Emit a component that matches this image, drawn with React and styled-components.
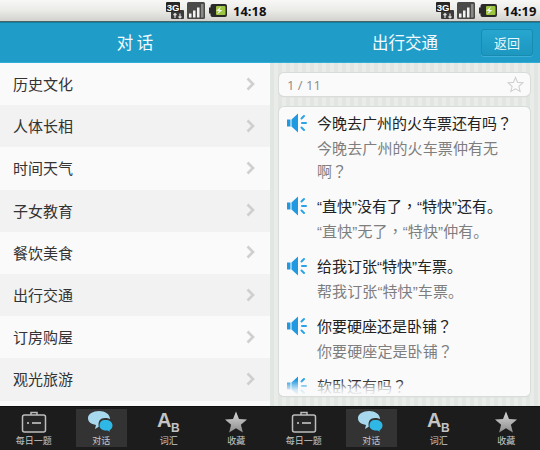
import React from 'react'
import styled, { createGlobalStyle } from 'styled-components'

const Global = createGlobalStyle`
  html, body { margin: 0; padding: 0; background: #1c1c1c; }
  * { box-sizing: border-box; }
  body { font-family: "Noto Sans CJK SC", "Noto Sans", sans-serif; }
`

const Page = styled.div`
  display: grid;
  grid-template-columns: 270px 270px;
  width: 540px;
  height: 450px;
  overflow: hidden;
`
const Screen = styled.div`
  display: flex;
  flex-direction: column;
  height: 450px;
  min-width: 0;
`
const StatusBar = styled.div`
  flex: 0 0 22px;
  height: 22px;
  display: flex;
  align-items: center;
  justify-content: flex-end;
  padding-right: 5px;
  background: linear-gradient(#f7f7f5, #ecece9 45%, #d2d2ce);
  border-bottom: 1px solid #4a6468;
`
const IconSlot = styled.span`
  display: flex;
  margin-right: ${p => p.$gap}px;
`
const Time = styled.span`
  font-family: "Open Sans", Arial, sans-serif;
  font-weight: 700;
  font-size: 13px;
  color: #111;
  width: 32px;
  white-space: nowrap;
`
const Header = styled.div`
  flex: 0 0 41px;
  height: 41px;
  padding-bottom: 1px;
  background: #1f9dc8;
  border-top: 1px solid #14809f;
  border-bottom: 1px solid #33acd6;
  display: flex;
  align-items: center;
  justify-content: center;
  position: relative;
  color: #f2fafd;
  font-size: 16.5px;
`
const BackButton = styled.div`
  position: absolute;
  right: 7px;
  top: 6px;
  width: 52px;
  height: 27px;
  border-radius: 3px;
  background: linear-gradient(#27a6cf, #1b97c0);
  border: 1px solid #1a8bb0;
  box-shadow: 0 1px 0 #3cb0d8;
  color: #e8f7fb;
  font-size: 13px;
  display: flex;
  align-items: center;
  justify-content: center;
`
const List = styled.div`
  flex: 1;
  display: flex;
  flex-direction: column;
  background: #fafafa;
  overflow: hidden;
`
const Row = styled.div`
  flex: 0 0 42.2px;
  display: flex;
  align-items: center;
  justify-content: space-between;
  padding: 0 15px 1px 13px;
  font-size: 15px;
  color: #333;
  background: ${p => (p.$alt ? '#f2f2f2' : '#fafafa')};
`
const Detail = styled.div`
  flex: 1;
  min-height: 0;
  padding: 10px 10px 10px 9px;
  display: flex;
  flex-direction: column;
  gap: 11px;
  background: repeating-linear-gradient(90deg, #e2e6e2 0 4px, #e9ece9 4px 8px);
`
const Card = styled.div`
  background: #fafafa;
  border-radius: 5px;
  box-shadow: 0 0 0 1px #d8dcd8, 0 1px 1px #c8ccc8;
`
const Counter = styled(Card)`
  flex: 0 0 23px;
  display: flex;
  align-items: center;
  justify-content: space-between;
  padding: 0 6px 0 8px;
  font-family: "Open Sans", "Noto Sans", sans-serif;
  font-size: 13px;
  color: #8c8c8c;
`
const Sentences = styled(Card)`
  flex: 1;
  min-height: 0;
  overflow: hidden;
  position: relative;
  padding: 4px 8px 0 8px;
`
const Fade = styled.div`
  position: absolute;
  left: 0;
  right: 0;
  bottom: 0;
  height: 16px;
  background: linear-gradient(rgba(250,250,250,0), rgba(250,250,250,0.8) 60%, #fafafa);
`
const Sentence = styled.div`
  display: grid;
  grid-template-columns: 30px 1fr;
  margin-bottom: 12px;
`
const SpeakerCell = styled.div`
  padding-top: 2px;
`
const Mandarin = styled.div`
  font-size: 15px;
  line-height: 24px;
  color: #222;
`
const Cantonese = styled.div`
  font-size: 15px;
  line-height: 23px;
  margin-top: 1px;
  color: #7e7e7e;
  letter-spacing: 0.1px;
`
const Punct = styled.span`
  font-family: "Noto Sans CJK TC", sans-serif;
  line-height: 0;
`
const Quote = styled.span`
  font-family: "Liberation Sans", sans-serif;
  line-height: 0;
`
const TabBar = styled.div`
  flex: 0 0 44px;
  height: 44px;
  display: grid;
  grid-template-columns: repeat(4, 1fr);
  padding: 2px 0 3px 0;
  background: #1c1c1c;
  border-top: 1px solid #111;
`
const Tab = styled.div`
  display: flex;
  flex-direction: column;
  align-items: center;
  justify-content: flex-end;
  margin: 0 ${p => (p.$active ? '8px' : '0')};
  background: ${p => (p.$active ? '#333' : 'transparent')};
  color: #c8c8c8;
  font-size: 9px;
  line-height: 11px;
  gap: 1px;
  padding-bottom: 1px;
`
const Glyph = styled.svg`
  overflow: visible;
`

const Net3G = () => (
  <Glyph width="18" height="17" viewBox="0 0 18 17">
    <rect x="5" y="8" width="13" height="9" rx="1" fill="#3a3a3a" />
    <rect x="0" y="0" width="14" height="10" rx="1" fill="#262626" />
    <text x="0.800" y="8.700" fontFamily="Liberation Sans" fontWeight="700" fontSize="9.500" fill="#fff">3G</text>
    <path d="M9 16v-4.500M7.500 13L9 11.500l1.500 1.500M14 11.500V16M12.500 14.500L14 16l1.500-1.500" stroke="#ddd" strokeWidth="1.200" fill="none" />
  </Glyph>
)
const Signal = () => (
  <svg width="18" height="17" viewBox="0 0 18 17">
    <rect width="18" height="17" rx="1.500" fill="#4a4a48" />
    <path d="M2 15.500h2.500v-4H2zM6 15.500h2.500v-7H6zM10 15.500h2.500v-10H10z" fill="#f2f2f2" />
    <path d="M14 15.500h2.500V2H14z" fill="#8a8a86" />
  </svg>
)
const Battery = () => (
  <svg width="18" height="13" viewBox="0 0 18 13">
    <rect x="0" y="3.500" width="2" height="6" fill="#2a2a2a" />
    <rect x="1.500" y="0" width="16.500" height="13" rx="2" fill="#2a2a2a" />
    <rect x="7" y="2" width="9.500" height="9" rx="1" fill="#9cc63f" />
    <path d="M12 2.500L7 7h3L8 10.500 13.500 6h-3z" fill="#f4f4f4" />
  </svg>
)
const Chevron = () => (
  <svg width="9" height="14" viewBox="0 0 9 14">
    <path d="M1.500 1.500L7 7l-5.500 5.500" fill="none" stroke="#cfcfcf" strokeWidth="2.600" />
  </svg>
)
const StarOutline = () => (
  <svg width="17" height="17" viewBox="0 0 24 24">
    <path d="M12 2l3 7 7.500.6-5.700 4.900 1.800 7.400L12 18l-6.600 3.900 1.800-7.400L1.500 9.600 9 9z" fill="#fbfbfb" stroke="#d0d0d0" strokeWidth="1.500" />
  </svg>
)
const Speaker = () => (
  <svg width="20" height="20" viewBox="0 0 20 20">
    <path d="M0 6.500h3.500v7H0zM4.500 6.500L11 .5v19l-6.500-6z" fill="#2199e0" />
    <path d="M14.500 5.500l2.500-2.500M15 10h4M14.500 14.500l2.500 2.500" stroke="#2ba3e6" strokeWidth="2" strokeLinecap="round" fill="none" />
  </svg>
)
const CaseIcon = () => (
  <svg width="26" height="24" viewBox="0 0 26 24">
    <path d="M10 5V2.500h6V5" fill="none" stroke="#bdbdbd" strokeWidth="1.500" />
    <rect x="1.500" y="5" width="23" height="17" rx="2" fill="#262626" stroke="#bdbdbd" strokeWidth="1.500" />
    <path d="M6 13h2M11 13h9" stroke="#cfcfcf" strokeWidth="1.500" />
  </svg>
)
const BubblesIcon = () => (
  <svg width="28" height="24" viewBox="0 0 28 24">
    <path d="M12 1c6 0 11 3 11 8 0 5-5 7-10 7l-5 3 1-4C4 14 1 12 1 8c0-4 5-7 11-7z" fill="#a8d8ee" />
    <path d="M18 8c5 0 9 2.500 9 7 0 3-1.500 5-3.500 6l1 2.500-4-2c-5 0-9-2.500-9-6.500S13 8 18 8z" fill="#333" />
    <path d="M18.500 10c4 0 7 2 7 5.500 0 2.500-1.500 4-3 4.800l.5 1.500-2.500-1.300c-4.500.3-8-1.500-8-5S14.500 10 18.500 10z" fill="#2fb8e6" />
  </svg>
)
const AbIcon = () => (
  <Glyph width="26" height="24" viewBox="0 0 26 24">
    <text x="1" y="17" fontFamily="Liberation Sans" fontWeight="700" fontSize="20" fill="#c4c4c4">A</text>
    <text x="15" y="22" fontFamily="Liberation Sans" fontWeight="700" fontSize="12" fill="#c4c4c4">B</text>
  </Glyph>
)
const StarIcon = () => (
  <svg width="24" height="24" viewBox="0 0 24 24">
    <defs>
      <linearGradient id="starfill" x1="0" y1="0" x2="0" y2="1">
        <stop offset="0" stopColor="#d8d8d8" />
        <stop offset="1" stopColor="#8c8c8c" />
      </linearGradient>
    </defs>
    <path d="M12 1.500l3 7.500 8 .6-6.100 5.100 2 7.800L12 18.200l-6.900 4.300 2-7.800L1 9.600 9 9z" fill="url(#starfill)" />
  </svg>
)

const topics = ['历史文化', '人体长相', '时间天气', '子女教育', '餐饮美食', '出行交通', '订房购屋', '观光旅游']
const sentences = [
  ['今晚去广州的火车票还有吗？', '今晚去广州的火车票仲有无啊？'],
  ['“直快”没有了，“特快”还有。', '“直快”无了，“特快”仲有。'],
  ['给我订张“特快”车票。', '帮我订张“特快”车票。'],
  ['你要硬座还是卧铺？', '你要硬座定是卧铺？'],
  ['软卧还有吗？', ''],
]
const tabs = [
  ['每日一题', CaseIcon],
  ['对话', BubblesIcon],
  ['词汇', AbIcon],
  ['收藏', StarIcon],
]

// reference has narrow quotes and full-width ， ？ centred in the cell
const styledMarks = text =>
  text.split(/([，？“”])/).map((part, i) => {
    if (i % 2 === 0) return part
    return /[“”]/.test(part) ? <Quote key={i}>{part}</Quote> : <Punct key={i}>{part}</Punct>
  })

function Status({ time }) {
  return (
    <StatusBar>
      <IconSlot $gap={3}><Net3G /></IconSlot>
      <IconSlot $gap={4}><Signal /></IconSlot>
      <IconSlot $gap={6}><Battery /></IconSlot>
      <Time>{time}</Time>
    </StatusBar>
  )
}

function Tabs() {
  return (
    <TabBar>
      {tabs.map(([label, Icon], i) => (
        <Tab key={label} $active={i === 1}>
          <Icon />
          {label}
        </Tab>
      ))}
    </TabBar>
  )
}

export default function App() {
  return (
    <Page>
      <Global />
      <Screen>
        <Status time="14:18" />
        <Header>对 话</Header>
        <List>
          {topics.map((t, i) => (
            <Row key={t} $alt={i % 2 === 1}>
              {t}
              <Chevron />
            </Row>
          ))}
        </List>
        <Tabs />
      </Screen>
      <Screen>
        <Status time="14:19" />
        <Header>
          出行交通
          <BackButton>返回</BackButton>
        </Header>
        <Detail>
          <Counter>
            1 / 11
            <StarOutline />
          </Counter>
          <Sentences>
            {sentences.map(([m, c]) => (
              <Sentence key={m}>
                <SpeakerCell><Speaker /></SpeakerCell>
                <div>
                  <Mandarin>{styledMarks(m)}</Mandarin>
                  {c && <Cantonese>{styledMarks(c)}</Cantonese>}
                </div>
              </Sentence>
            ))}
            <Fade />
          </Sentences>
        </Detail>
        <Tabs />
      </Screen>
    </Page>
  )
}
